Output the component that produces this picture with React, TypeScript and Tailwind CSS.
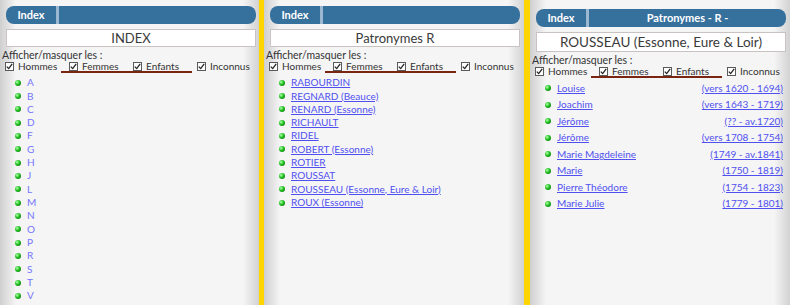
import React from "react";

type Row = { name: string; dates?: string };

type PanelProps = {
  width: string;
  tab: string;
  headerRight?: string;
  title: string;
  rows: Row[];
  big?: boolean;
  plain?: boolean;
};

const Check: React.FC<{ label: string }> = ({ label }) => (
  <div className="flex items-center gap-[4px]">
    <span className="w-[9px] h-[9px] border border-[#5a5a5a] bg-white flex items-center justify-center">
      <svg width="7" height="7" viewBox="0 0 7 7">
        <path d="M0.8 3.6 L2.7 5.6 L6.2 0.9" fill="none" stroke="#222" strokeWidth="1.3" />
      </svg>
    </span>
    <span>{label}</span>
  </div>
);

const Bullet = () => (
  <span className="w-[6px] h-[6px] rounded-full shrink-0 bg-[radial-gradient(circle_at_35%_35%,#b6ffb0,#1fbf1f_45%,#0b5a0b)]" />
);

const Panel: React.FC<PanelProps> = ({ width, tab, headerRight, title, rows, big, plain }) => (
  <div
    className={`${width} h-full shrink-0 bg-[linear-gradient(to_right,#cfcfcf,#f5f5f5_16px,#f5f5f5_calc(100%_-_16px),#d2d2d2)] px-[6px] ${
      big ? "pt-[9px]" : "pt-[6px]"
    }`}
  >
    <div className="flex h-[18px] w-[250px] rounded-[8px] bg-[#36709d] overflow-hidden text-white font-bold text-[11px]">
      <div className="w-[50px] flex items-center justify-center">{tab}</div>
      <div className="w-[3px] bg-[#9bb8d0]" />
      <div className="flex-1 flex items-center justify-center">{headerRight}</div>
    </div>
    <div
      className={`w-[250px] border border-[#c8c2c2] bg-white text-center text-[#3a3a3a] ${
        big ? "mt-[5px] h-[20px] text-[13.5px] leading-[18px]" : "mt-[5px] h-[18px] text-[13px] leading-[16px]"
      }`}
    >
      {title}
    </div>
    <div className={`-ml-[4px] text-[10.5px] leading-[10px] text-[#333] ${big ? "mt-[3px]" : "mt-[3px]"}`}>
      Afficher/masquer les :
    </div>
    <div className="relative -ml-[1px] mt-[1px] grid grid-cols-[64px_64px_64px_64px] h-[10px] text-[10px] leading-[10px] text-[#333]">
      <Check label="Hommes" />
      <Check label="Femmes" />
      <Check label="Enfants" />
      <Check label="Inconnus" />
      <div className="absolute left-[56px] w-[131px] top-[10px] h-[2px] bg-[#7a2412]" />
    </div>
    <ul className={`pl-[9px] ${big ? "mt-[4px]" : "mt-[5px]"}`}>
      {rows.map((r, i) => (
        <li
          key={i}
          className={`flex items-center gap-[6px] text-[10px] ${big ? "h-[16.5px]" : "h-[13.33px]"}`}
        >
          <Bullet />
          <a className={plain ? "text-[#7474ff]" : "text-[#5050f0] underline"}>{r.name}</a>
          {r.dates && (
            <a className="ml-auto mr-[1px] text-[#5050f0] underline">{r.dates}</a>
          )}
        </li>
      ))}
    </ul>
  </div>
);

const letters = ["A", "B", "C", "D", "F", "G", "H", "J", "L", "M", "N", "O", "P", "R", "S", "T", "V"];

const names = [
  "RABOURDIN",
  "REGNARD (Beauce)",
  "RENARD (Essonne)",
  "RICHAULT",
  "RIDEL",
  "ROBERT (Essonne)",
  "ROTIER",
  "ROUSSAT",
  "ROUSSEAU (Essonne, Eure & Loir)",
  "ROUX (Essonne)",
];

const people: Row[] = [
  { name: "Louise", dates: "(vers 1620 - 1694)" },
  { name: "Joachim", dates: "(vers 1643 - 1719)" },
  { name: "Jérôme", dates: "(?? - av.1720)" },
  { name: "Jérôme", dates: "(vers 1708 - 1754)" },
  { name: "Marie Magdeleine", dates: "(1749 - av.1841)" },
  { name: "Marie", dates: "(1750 - 1819)" },
  { name: "Pierre Théodore", dates: "(1754 - 1823)" },
  { name: "Marie Julie", dates: "(1779 - 1801)" },
];

export default function App() {
  return (
    <div className="flex w-[790px] h-[305px] overflow-hidden font-['Lato',sans-serif]">
      <Panel width="w-[259px]" tab="Index" title="INDEX" rows={letters.map((l) => ({ name: l }))} plain />
      <div className="w-[5px] h-full bg-[#ffd500]" />
      <Panel width="w-[260px]" tab="Index" title="Patronymes R" rows={names.map((n) => ({ name: n }))} />
      <div className="w-[6px] h-full bg-[#ffd500]" />
      <Panel
        width="w-[260px]"
        tab="Index"
        headerRight="Patronymes - R -"
        title="ROUSSEAU (Essonne, Eure & Loir)"
        rows={people}
        big
      />
    </div>
  );
}
